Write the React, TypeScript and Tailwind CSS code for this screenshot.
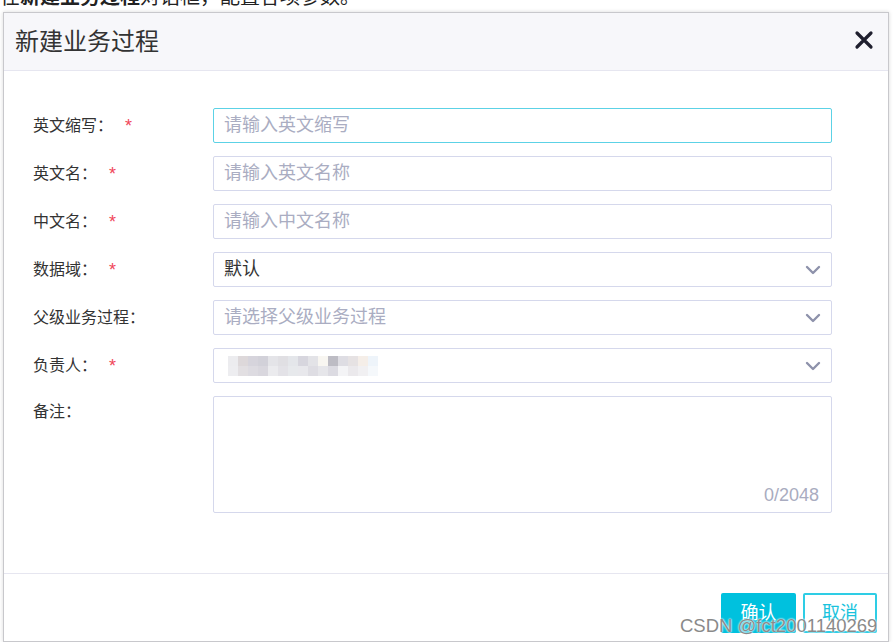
import React from 'react';

const fields = [
  { label: '英文缩写：', required: true, placeholder: '请输入英文缩写', focused: true },
  { label: '英文名：', required: true, placeholder: '请输入英文名称' },
  { label: '中文名：', required: true, placeholder: '请输入中文名称' },
  { label: '数据域：', required: true, value: '默认', select: true },
  { label: '父级业务过程：', required: false, placeholder: '请选择父级业务过程', select: true },
  { label: '负责人：', required: true, masked: true, select: true },
];

// blurred owner name - mosaic blocks
const mosaic = [
  ['#ececef', '#ddd8da', '#d6d4dc', '#d2d1d9', '#e4e4e8', '#e0dfe3', '#e4e6ea', '#d7d6de', '#e3e3e7', '#f8f6f1', '#bdbcc4', '#dedde3', '#e6e2e3', '#f5eee8', '#eef4fa'],
  ['#ededf0', '#e2dfe2', '#dddbe1', '#d9d7de', '#ebebee', '#e3e2e7', '#e7e9ec', '#e8e8ec', '#dedde3', '#e6e6ea', '#dcdbe2', '#f4f4f6', '#ebe9ec', '#f1f0f2', '#f5f8fb'],
];

const Chevron = () => (
  <svg width="16" height="10" viewBox="0 0 16 10" fill="none">
    <path d="M2 2l6 6 6-6" stroke="#8e92ab" strokeWidth="2.4" strokeLinecap="round" strokeLinejoin="round" />
  </svg>
);

const App = () => {
  return (
    <div className="relative w-[896px] h-[642px] overflow-hidden bg-white text-[#333] font-['Liberation_Sans','Noto_Sans_CJK_SC',sans-serif]">
      <div className="h-[12px] overflow-hidden">
        <p className="-mt-[16px] text-[20px] leading-[26px] whitespace-nowrap text-[#222]">
          在<b>新建业务过程</b>对话框，配置各项参数。
        </p>
      </div>

      <div className="ml-[3px] w-[886px] h-[630px] flex flex-col border border-[#c8c8cc] shadow-[0_0_4px_rgba(0,0,0,0.15)]">
        <div className="h-[58px] shrink-0 flex items-center justify-between pl-[11px] pr-[14px] bg-[#f7f7fa] border-b border-[#e6e6f0]">
          <span className="text-[24px] text-[#333]">新建业务过程</span>
          <svg width="20" height="20" viewBox="0 0 20 20" className="mt-[-3px]">
            <path d="M3 3l14 14M17 3L3 17" stroke="#1f1f2e" strokeWidth="3.2" strokeLinecap="round" />
          </svg>
        </div>

        <div className="flex-1 pt-[37px] pl-[29px] pr-[56px] flex flex-col gap-[13px]">
          {fields.map((f, i) => (
            <div key={i} className="flex items-center h-[35px]">
              <div className="w-[180px] shrink-0 text-[16px] flex items-center">
                <span>{f.label}</span>
                {f.required && <span className="ml-[12px] text-[#f0465a] text-[18px] leading-none">*</span>}
              </div>
              <div
                className={`flex-1 h-[35px] rounded-[2px] border flex items-center justify-between pl-[10px] pr-[10px] ${
                  f.focused ? 'border-[#5cd2e6] border-[1.5px]' : 'border-[#d5d8ec]'
                }`}
              >
                {f.masked ? (
                  <div className="flex flex-col ml-[4px]">
                    {mosaic.map((row, r) => (
                      <div key={r} className="flex">
                        {row.map((c, k) => (
                          <div key={k} className="w-[10px] h-[10px]" style={{ background: c }} />
                        ))}
                      </div>
                    ))}
                  </div>
                ) : f.value ? (
                  <span className="text-[18px] text-[#333]">{f.value}</span>
                ) : (
                  <span className="text-[18px] text-[#aaadc2]">{f.placeholder}</span>
                )}
                {f.select && <Chevron />}
              </div>
            </div>
          ))}

          <div className="flex">
            <div className="w-[180px] shrink-0 text-[16px] pt-[4px]">备注：</div>
            <div className="flex-1 h-[117px] rounded-[2px] border border-[#d5d8ec] flex items-end justify-end pr-[12px] pb-[3px]">
              <span className="text-[18px] text-[#a9acc0]">0/2048</span>
            </div>
          </div>
        </div>

        <div className="h-[68px] shrink-0 border-t border-[#e6e6f0] flex justify-end items-start gap-[7px] pt-[19px] pr-[11px]">
          <button className="w-[75px] h-[40px] rounded-[2px] bg-[#00c1de] text-white text-[18px]">确认</button>
          <button className="w-[74px] h-[40px] rounded-[2px] border-2 border-[#2ecde5] bg-white text-[#19c3dd] text-[18px]">取消</button>
        </div>
      </div>

      <div className="absolute left-[680px] top-[612px] text-[18.5px] text-[#8a8a8a] whitespace-nowrap [text-shadow:0_0_2px_#fff,0_0_2px_#fff]">
        CSDN @fct2001140269
      </div>
    </div>
  );
};

export default App;
